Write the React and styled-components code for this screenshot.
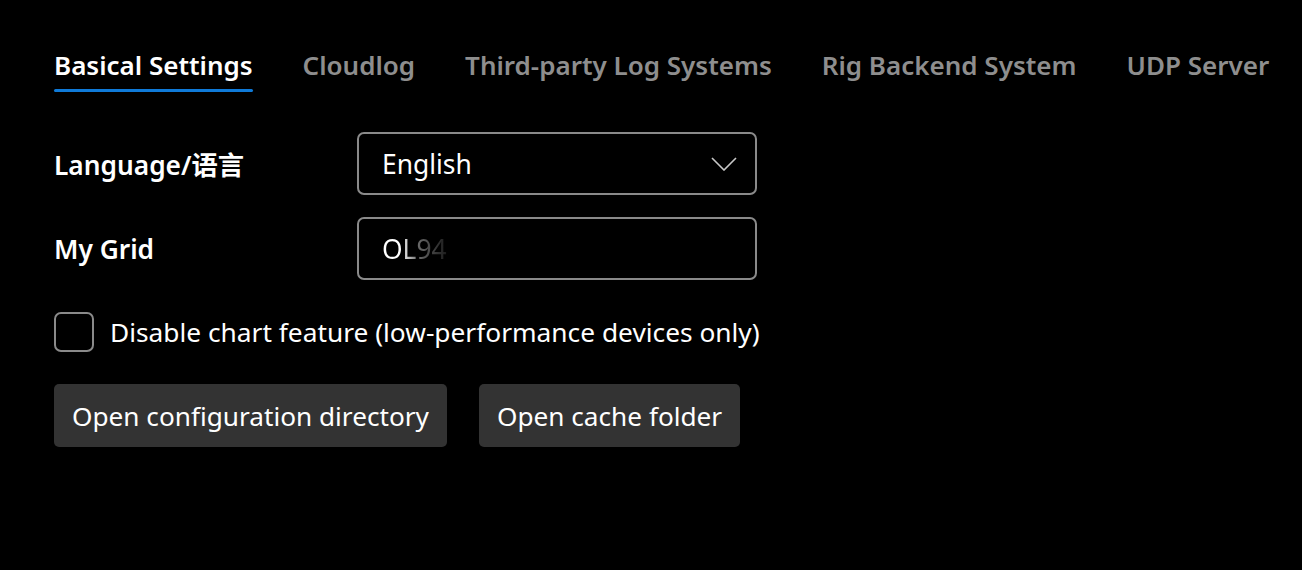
import React from "react";
import styled, { createGlobalStyle } from "styled-components";

const GlobalStyle = createGlobalStyle`
  html, body {
    margin: 0;
    padding: 0;
    background: #000;
  }
  body {
    font-family: "Noto Sans", "Noto Sans CJK SC", sans-serif;
    color: #fff;
  }
`;

const Page = styled.div`
  width: 1302px;
  height: 570px;
  box-sizing: border-box;
  padding: 47px 0 0 54px;
  background: #000;
`;

const Tabs = styled.div`
  display: flex;
  gap: 50px;
`;

const Tab = styled.div`
  display: flex;
  flex-direction: column;
  gap: 6px;
  font-size: 26px;
  font-weight: 600;
  line-height: 36px;
  color: ${({ active }) => (active ? "#ffffff" : "#8e8e8e")};
  white-space: nowrap;

  &::after {
    content: "";
    height: 3px;
    border-radius: 2px;
    background: ${({ active }) => (active ? "#0f7ad8" : "transparent")};
  }
`;

const Form = styled.div`
  display: flex;
  flex-direction: column;
  margin-top: 40px;
`;

const Row = styled.div`
  display: grid;
  grid-template-columns: 303px 400px;
  align-items: center;
  margin-bottom: 22px;
`;

const Label = styled.div`
  font-size: 26.3px;
  font-weight: 600;
  color: #fff;
`;

const Field = styled.div`
  display: flex;
  align-items: center;
  justify-content: space-between;
  box-sizing: border-box;
  height: 63px;
  padding: 0 18px 0 23px;
  border: 2px solid #8a8a8a;
  border-radius: 7px;
  font-size: 26.4px;
  color: #fff;
`;

const Blurred = styled.span`
  background: linear-gradient(to right, #ffffff 0%, #ffffff 30%, #6a6a6a 55%, #1a1a1a 100%);
  -webkit-background-clip: text;
  background-clip: text;
  color: transparent;
`;

const CheckRow = styled.label`
  display: flex;
  align-items: center;
  gap: 16px;
  margin-top: 10px;
  font-size: 26.3px;
  color: #fff;
`;

const Box = styled.span`
  width: 40px;
  height: 40px;
  box-sizing: border-box;
  border: 2px solid #8a8a8a;
  border-radius: 7px;
  flex-shrink: 0;
`;

const Buttons = styled.div`
  display: flex;
  gap: 32px;
  margin-top: 32px;
`;

const Button = styled.button`
  height: 63px;
  padding: 0 18px;
  border: none;
  border-radius: 5px;
  background: #333333;
  color: #fff;
  font-family: inherit;
  font-size: 26.2px;
`;

const Chevron = () => (
  <svg width="26" height="14" viewBox="0 0 26 14">
    <path d="M1 1 L13 13 L25 1" fill="none" stroke="#c8c8c8" strokeWidth="1.6" />
  </svg>
);

const tabs = [
  "Basical Settings",
  "Cloudlog",
  "Third-party Log Systems",
  "Rig Backend System",
  "UDP Server",
];

export default function App() {
  return (
    <Page>
      <GlobalStyle />
      <Tabs>
        {tabs.map((t, i) => (
          <Tab key={t} active={i === 0}>
            {t}
          </Tab>
        ))}
      </Tabs>
      <Form>
        <Row>
          <Label>Language/语言</Label>
          <Field>
            English
            <Chevron />
          </Field>
        </Row>
        <Row>
          <Label>My Grid</Label>
          <Field>
            <Blurred>OL94</Blurred>
          </Field>
        </Row>
        <CheckRow>
          <Box />
          Disable chart feature (low-performance devices only)
        </CheckRow>
        <Buttons>
          <Button>Open configuration directory</Button>
          <Button>Open cache folder</Button>
        </Buttons>
      </Form>
    </Page>
  );
}
